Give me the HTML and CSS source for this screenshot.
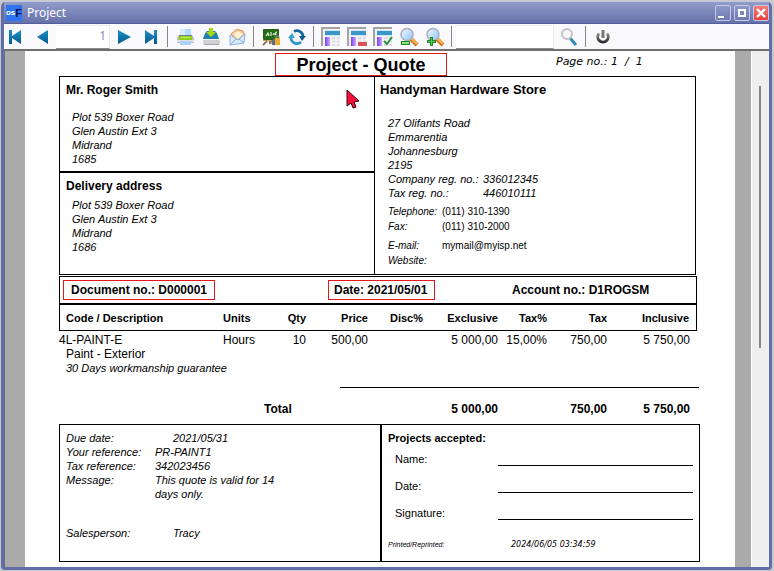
FILE: index.html
```html
<!DOCTYPE html>
<html lang="en">
<head>
<meta charset="utf-8">
<title>Project</title>
<link rel="stylesheet" href="styles.css">
</head>
<body>
<svg class="defs" aria-hidden="true">
  <defs>
    <linearGradient id="blue" x1="0" y1="0" x2="0" y2="1"><stop offset="0" stop-color="#1c8fc6"/><stop offset="1" stop-color="#055a92"/></linearGradient>
    <linearGradient id="violet" x1="0" y1="0" x2="1" y2="0"><stop offset="0" stop-color="#7c3ff0"/><stop offset="1" stop-color="#c9a8ff"/></linearGradient>
    <linearGradient id="glass" x1="0" y1="0" x2="1" y2="1"><stop offset="0" stop-color="#f4faff"/><stop offset="1" stop-color="#8fc2f6"/></linearGradient>
    <linearGradient id="power" x1="0" y1="0" x2="0" y2="1"><stop offset="0" stop-color="#909090"/><stop offset="1" stop-color="#2c2c2c"/></linearGradient>
    <symbol id="sheet" viewBox="0 0 20 20">
      <path d="M1 1h18v18H1z" fill="#f3f3f5"/>
      <path d="M1 19V1h18" fill="none" stroke="#a3a3a7" stroke-width="2"/>
      <path d="M4 3h15v6H4z" fill="#cfe3f2"/>
      <path d="M4 4h15v4H4z" fill="#3c97c9"/>
      <path d="M4 10h5v9H4z" fill="url(#violet)"/>
      <path d="M11 10h8v9h-8z" fill="#dcdce3"/>
      <path d="M11 13h8M11 16h8M15 10v9" stroke="#fff"/>
    </symbol>
    <symbol id="lens" viewBox="0 0 20 20">
      <path d="M12 12l6 6" stroke="#c96a1c" stroke-width="4"/>
      <path d="M12 11l6 6" stroke="#ffb04a" stroke-width="2.5"/>
      <circle cx="8" cy="7.500" r="6" fill="url(#glass)" stroke="#a4b0c0" stroke-width="1.5"/>
    </symbol>
  </defs>
</svg>
<div class="window">
  <header class="titlebar">
    <span class="logo"><span>os</span><b>F</b></span>
    <h1>Project</h1>
    <button class="control" aria-label="Minimize"><svg viewBox="0 0 14 14"><path d="M2 10h6v2H2z" fill="#fff"/></svg></button>
    <button class="control" aria-label="Maximize"><svg viewBox="0 0 14 14"><path d="M4 4h6v6H4z" fill="none" stroke="#fff" stroke-width="2"/></svg></button>
    <button class="control close" aria-label="Close"><svg viewBox="0 0 14 14"><path d="M3 3l8 8M11 3l-8 8" stroke="#fff" stroke-width="2.4"/></svg></button>
  </header>
  <nav class="toolbar" aria-label="Report tools">
    <button aria-label="First page"><svg viewBox="0 0 20 20"><path d="M4 3h3v6l9-6v14l-9-6v6H4z" fill="url(#blue)"/></svg></button>
    <button aria-label="Previous page"><svg viewBox="0 0 20 20"><path d="M17 3v14L6 10z" fill="url(#blue)"/></svg></button>
    <input class="page-number" type="text" value="1" aria-label="Page">
    <button aria-label="Next page"><svg viewBox="0 0 20 20"><path d="M3 3v14l13-7z" fill="url(#blue)"/></svg></button>
    <button aria-label="Last page"><svg viewBox="0 0 20 20"><path d="M16 3h-3v6L4 3v14l9-6v6h3z" fill="url(#blue)"/></svg></button>
    <span class="separator"></span>
    <button aria-label="Print"><svg viewBox="0 0 20 20"><path d="M5 2h11v7H5z" fill="#b0d8fa"/><path d="M5 2h5v7H5z" fill="#d8ecfc"/><path d="M4 8h13l2 3v5H2v-5z" fill="#b8bbc0"/><path d="M4 8h13v2H4z" fill="#7c8086"/><path d="M4 9h13v4H4z" fill="#8cd01c"/><path d="M6 10h9v1H6z" fill="#c3ee6a"/><path d="M2 13h17v2H2z" fill="#e0e2e5"/><path d="M5 14h11v4H5z" fill="#a9d2f6"/></svg></button>
    <button aria-label="Save"><svg viewBox="0 0 20 20"><path d="M6 4h8q2 1 4 8H2q2-7 4-8z" fill="#2380ae"/><path d="M2 12h17v4l-1 2H3l-1-2z" fill="#cfd1d4"/><path d="M2 12h17v1H2z" fill="#f2f2f2"/><path d="M3 17h15v1H3z" fill="#a4a6aa"/><path d="M8 1h4v4h3l-5 5-5-5h3z" fill="#a4dc10"/></svg></button>
    <button aria-label="E-mail"><svg viewBox="0 0 20 20"><path d="M4 7l6-5 6 2 2 4-8 6z" fill="#f5c78c" stroke="#d89d59"/><path d="M6 7l5-3 5 3-5 5z" fill="#fff0d5"/><path d="M3 8l8 5 7-6-1 9-14 2z" fill="#d6eafb" stroke="#8fb0dc"/><path d="M3 18l6-6M17 16l-5-4" stroke="#8fb0dc"/></svg></button>
    <span class="separator"></span>
    <button aria-label="Design"><svg viewBox="0 0 20 20"><path d="M2.500 2.500h15v10h-15z" fill="#236b16" stroke="#2f5c1c"/><path d="M5 9l2-3 1 3M10 9V5M12 8q1-3 2 0M16 5q-2 0-1 3" fill="none" stroke="#e8f5df" stroke-width="1.2"/><path d="M2 13.500h16" stroke="#c9a25c"/><path d="M6 14l-4 4M9 14v3M12 14l2 4" stroke="#7b5d2d" stroke-width="1.600"/><path d="M14 11h5v7h-5z" fill="#f1ab28"/><path d="M10 14l4-3v7h-3z" fill="#5c6f80"/><path d="M15 11V9h3v2" fill="none" stroke="#9a9a9a"/></svg></button>
    <button aria-label="Refresh"><svg viewBox="0 0 20 20"><path d="M7 4.500a6 6 0 0 1 9 5" fill="none" stroke="#14689c" stroke-width="2.8"/><path d="M12 9h7l-4 5z" fill="#0f5f96"/><path d="M14 15a6 6 0 0 1-10-5" fill="none" stroke="#2b93c6" stroke-width="2.800"/><path d="M1 11h7L5 6z" fill="#38a0cc"/></svg></button>
    <span class="separator"></span>
    <button aria-label="Layout"><svg viewBox="0 0 20 20"><use href="#sheet"/></svg></button>
    <button aria-label="Remove layout"><svg viewBox="0 0 20 20"><use href="#sheet"/><path d="M11 15h9v4h-9z" fill="#d9535a"/></svg></button>
    <button aria-label="Apply layout"><svg viewBox="0 0 20 20"><use href="#sheet"/><path d="M11 14l3 3 5-7" fill="none" stroke="#2f9142" stroke-width="2"/></svg></button>
    <button aria-label="Zoom out"><svg viewBox="0 0 20 20"><use href="#lens"/><path d="M2 14h9v4H2z" fill="#208a28"/><path d="M3 15h7v2H3z" fill="#8be07e"/></svg></button>
    <button aria-label="Zoom in"><svg viewBox="0 0 20 20"><use href="#lens"/><path d="M5 10h3v3h3v3H8v3H5v-3H2v-3h3z" fill="#208a28"/><path d="M6.500 11v7M3 14.500h7" stroke="#58c458"/></svg></button>
    <span class="separator"></span>
    <input class="find" type="text" aria-label="Find text">
    <button aria-label="Find"><svg viewBox="0 0 20 20"><path d="M11 11l6 7" stroke="#2f8bb3" stroke-width="3"/><circle cx="8" cy="7" r="5" fill="#f6f6f7" stroke="#c3c3c6" stroke-width="2"/></svg></button>
    <span class="separator"></span>
    <button aria-label="Close report"><svg viewBox="0 0 20 20"><path d="M6 6.500a5.200 5.200 0 1 0 8 0" fill="none" stroke="url(#power)" stroke-width="2.800"/><path d="M8.500 3h3v8h-3z" fill="#777"/></svg></button>
  </nav>
  <div class="viewer">
    <main class="paper">
      <div class="heading">
        <h2 class="report-title">Project - Quote</h2>
        <p class="page-count">Page no.: 1 &nbsp;/ &nbsp;1</p>
      </div>
      <section class="parties">
        <div class="customer">
          <h3>Mr. Roger Smith</h3>
          <address>Plot 539 Boxer Road<br>Glen Austin Ext 3<br>Midrand<br>1685</address>
        </div>
        <div class="delivery">
          <h3>Delivery address</h3>
          <address>Plot 539 Boxer Road<br>Glen Austin Ext 3<br>Midrand<br>1686</address>
        </div>
        <div class="company">
          <h3>Handyman Hardware Store</h3>
          <address>27 Olifants Road<br>Emmarentia<br>Johannesburg<br>2195</address>
          <dl class="registration">
            <dt>Company reg. no.:</dt><dd>336012345</dd>
            <dt>Tax reg. no.:</dt><dd>446010111</dd>
          </dl>
          <dl class="contact">
            <dt>Telephone:</dt><dd>(011) 310-1390</dd>
            <dt>Fax:</dt><dd>(011) 310-2000</dd>
          </dl>
          <dl class="contact">
            <dt>E-mail:</dt><dd>mymail@myisp.net</dd>
            <dt>Website:</dt><dd></dd>
          </dl>
        </div>
      </section>
      <section class="document">
        <strong class="marked number">Document no.: D000001</strong>
        <strong class="marked date">Date: 2021/05/01</strong>
        <strong>Account no.: D1ROGSM</strong>
      </section>
      <table class="items">
        <colgroup><col><col class="units"><col class="qty"><col class="price"><col class="disc"><col class="exclusive"><col class="rate"><col class="tax"><col class="inclusive"></colgroup>
        <thead>
          <tr><th>Code / Description</th><th>Units</th><th>Qty</th><th>Price</th><th>Disc%</th><th>Exclusive</th><th>Tax%</th><th>Tax</th><th>Inclusive</th></tr>
        </thead>
        <tbody>
          <tr><td>4L-PAINT-E</td><td>Hours</td><td>10</td><td>500,00</td><td></td><td>5 000,00</td><td>15,00%</td><td>750,00</td><td>5 750,00</td></tr>
          <tr><td class="detail" colspan="9">Paint - Exterior</td></tr>
          <tr><td class="detail note" colspan="9">30 Days workmanship guarantee</td></tr>
        </tbody>
      </table>
      <hr class="sum-line">
      <table class="items totals">
        <colgroup><col><col class="units"><col class="qty"><col class="price"><col class="disc"><col class="exclusive"><col class="rate"><col class="tax"><col class="inclusive"></colgroup>
        <tbody>
          <tr><td></td><th class="total" colspan="2" scope="row">Total</th><td></td><td></td><td>5 000,00</td><td></td><td>750,00</td><td>5 750,00</td></tr>
        </tbody>
      </table>
      <section class="closing">
        <div class="terms">
          <dl>
            <dt>Due date:</dt><dd class="inset">2021/05/31</dd>
            <dt>Your reference:</dt><dd>PR-PAINT1</dd>
            <dt>Tax reference:</dt><dd>342023456</dd>
            <dt>Message:</dt><dd>This quote is valid for 14<br>days only.</dd>
          </dl>
          <dl class="sales">
            <dt>Salesperson:</dt><dd class="inset">Tracy</dd>
          </dl>
        </div>
        <div class="acceptance">
          <h3>Projects accepted:</h3>
          <p class="sign"><span>Name:</span><i></i></p>
          <p class="sign"><span>Date:</span><i></i></p>
          <p class="sign"><span>Signature:</span><i></i></p>
          <p class="printed"><span>Printed/Reprinted:</span><time>2024/06/05 03:34:59</time></p>
        </div>
      </section>
      <svg class="pointer" viewBox="0 0 14 20" aria-hidden="true"><path d="M1 1v16l4-3 2 5 3-1-2-5 5-1z" fill="#f5103c" stroke="#30040c"/></svg>
    </main>
    <div class="scrollbar"><div class="thumb"></div></div>
  </div>
</div>
</body>
</html>
```
FILE: styles.css
```css
* { box-sizing: border-box; }

body {
  margin: 0;
  padding: 1px 2px 1px 1px;
  min-height: 100vh;
  display: flex;
  background: #c9c9cc;
  color: #000;
  font: 12px/14px "Liberation Sans", Arial, sans-serif;
}

h1, h2, h3, p, dl, dd { margin: 0; }
button { padding: 0; border: 0; background: none; }
.defs { position: absolute; width: 0; height: 0; }

.window {
  flex: 1;
  display: flex;
  flex-direction: column;
  border: solid #626eaa;
  border-width: 0 3px 3px;
  border-radius: 6px 6px 4px 4px;
  background: #626eaa;
}

.titlebar {
  display: flex;
  align-items: center;
  gap: 3px;
  height: 23px;
  padding: 0 0 0 2px;
  border-top: 1px solid #c3c9e4;
  border-bottom: 1px solid #525e9c;
  background: linear-gradient(#929cca, #6571a9);
}
.titlebar h1 {
  flex: 1;
  margin-left: 2px;
  color: #fff;
  font: 12px/16px "Noto Sans", sans-serif;
}
.logo {
  width: 16px;
  height: 16px;
  background: #2f74ee;
  color: #fff;
  font: bold 8px/16px "Liberation Sans", sans-serif;
  display: flex;
  justify-content: center;
}
.logo b { color: #0a1350; font-size: 11px; }
.control {
  width: 16px;
  height: 16px;
  border: 1px solid #c5cbe6;
  border-radius: 2px;
  background: linear-gradient(#8d98ca, #6f7bb4);
}
.control svg { display: block; width: 14px; height: 14px; }
.close { background: linear-gradient(#f47c78, #e8403c); }

.toolbar {
  display: flex;
  align-items: center;
  gap: 4px;
  height: 25px;
  background: #f9f9fc;
}
.toolbar button { width: 22px; height: 22px; }
.toolbar svg { display: block; width: 20px; height: 20px; margin: 0 auto; }
.separator { width: 1px; height: 21px; margin: 0 2px 0 1px; background: #85858a; }
.toolbar input {
  height: 24px;
  padding: 0 3px 3px;
  border: solid #ececec;
  border-width: 1px 1px 1px 0;
  border-bottom-color: #8a8a8a;
  background: #fff;
  color: #9a84c8;
  font: 12px "Noto Sans", sans-serif;
  text-align: right;
}
.toolbar .page-number { width: 54px; }
.toolbar .find { width: 98px; margin-left: -2px; }

.viewer {
  flex: 1;
  display: flex;
  border: solid #6e6e70;
  border-width: 2px 0 0 1px;
  background: #ababab;
}
.paper {
  position: relative;
  flex: 1;
  margin-left: 20px;
  padding: 2px 36px 4px 34px;
  background: #fff;
}
.scrollbar {
  width: 18px;
  margin-left: 16px;
  border-left: 1px solid #fff;
  background: #efefef;
  padding: 35px 8px 0 7px;
}
.thumb { height: 262px; background: #868686; }

.heading { display: flex; }
.report-title {
  width: 172px;
  margin-left: 216px;
  border: 1px solid #e8141c;
  font-size: 18px;
  line-height: 23px;
  height: 23px;
  text-align: center;
}
.page-count {
  margin-left: 109px;
  font: italic 11px/18px "DejaVu Sans", sans-serif;
}

.parties {
  display: grid;
  grid-template: 96px 1fr / 315px 1fr;
  margin-right: 3px;
  border: 1px solid #000;
}
.parties h3 { font-size: 12px; line-height: 16px; }
address { font-size: 11px; }
.customer, .delivery { padding: 5px 6px; border-right: 1px solid #000; }
.customer { border-bottom: 2px solid #000; }
.customer address { margin: 12px 0 0 6px; }
.delivery address { margin: 4px 0 0 6px; }
.company { grid-area: 1 / 2 / 3 / 3; padding: 5px 5px 6px; }
.parties .company h3 { font-size: 13px; }
.company address { margin: 18px 0 0 8px; }

dl { display: grid; font-size: 11px; }
dt { font-style: italic; }
.registration { grid-template-columns: 95px 1fr; margin-left: 8px; font-style: italic; }
.contact {
  grid-template-columns: 54px 1fr;
  margin: 4px 0 0 8px;
  font-size: 10px;
  line-height: 15px;
}

.document {
  display: grid;
  grid-template-columns: 269px 183px 1fr;
  justify-items: start;
  align-items: center;
  height: 27px;
  margin: 1px 2px 0 0;
  border: solid #000;
  border-width: 1px 1px 0;
}
.marked { border: 1px solid #e8141c; line-height: 18px; }
.number { width: 152px; margin-left: 3px; padding-left: 7px; }
.date { width: 107px; padding-left: 5px; margin-left: -1px; }

.items {
  width: calc(100% - 2px);
  table-layout: fixed;
  border-collapse: separate;
  border-spacing: 0;
}
.units { width: 57px; }
.qty { width: 26px; }
.price { width: 62px; }
.disc { width: 55px; }
.exclusive { width: 75px; }
.rate { width: 49px; }
.tax { width: 60px; }
.inclusive { width: 90px; }
.items th, .items td { padding: 0; text-align: right; white-space: nowrap; }
.items td:first-child, .items th:first-child,
.items td:nth-child(2), .items th:nth-child(2) { text-align: left; }
.items td:last-child, .items th:last-child { padding-right: 7px; }
.items thead th {
  height: 28px;
  border: solid #000;
  border-width: 2px 0 1px;
  font-size: 11px;
}
.items thead th:first-child { padding-left: 6px; border-left-width: 1px; }
.items thead th:last-child { border-right-width: 1px; }
.items tbody tr:first-child td { padding-top: 2px; }
.items .detail { padding-left: 7px; }
.items .note { font-size: 11px; font-style: italic; }
.sum-line { margin: 12px 0 0 281px; border: 0; border-top: 1px solid #000; }
.totals { margin: 12px 0 8px; font-weight: bold; }
.items .total { padding: 2px 0 0 41px; }

.closing {
  display: grid;
  grid-template-columns: 322px 1fr;
  margin-right: -1px;
  border: 1px solid #000;
}
.terms { padding: 6px 6px 21px; border-right: 2px solid #000; }
.terms dl { grid-template-columns: 89px 1fr; }
.terms dd { font-style: italic; }
.terms .inset { padding-left: 18px; }
.terms .sales { margin-top: 25px; }
.acceptance { padding: 6px 6px 0; }
.acceptance h3 { font-size: 11px; height: 8px; }
.sign {
  display: grid;
  grid-template-columns: 103px 1fr;
  align-items: end;
  height: 27px;
  margin-left: 7px;
  font-size: 11px;
}
.sign i { border-bottom: 1px solid #000; }
.printed {
  display: grid;
  grid-template-columns: 123px 1fr;
  margin-top: 18px;
  font-size: 7px;
  font-style: italic;
}
.printed time { font-family: "DejaVu Sans", sans-serif; font-size: 8px; }

.pointer { position: absolute; left: 321px; top: 38px; width: 14px; height: 20px; }
```
